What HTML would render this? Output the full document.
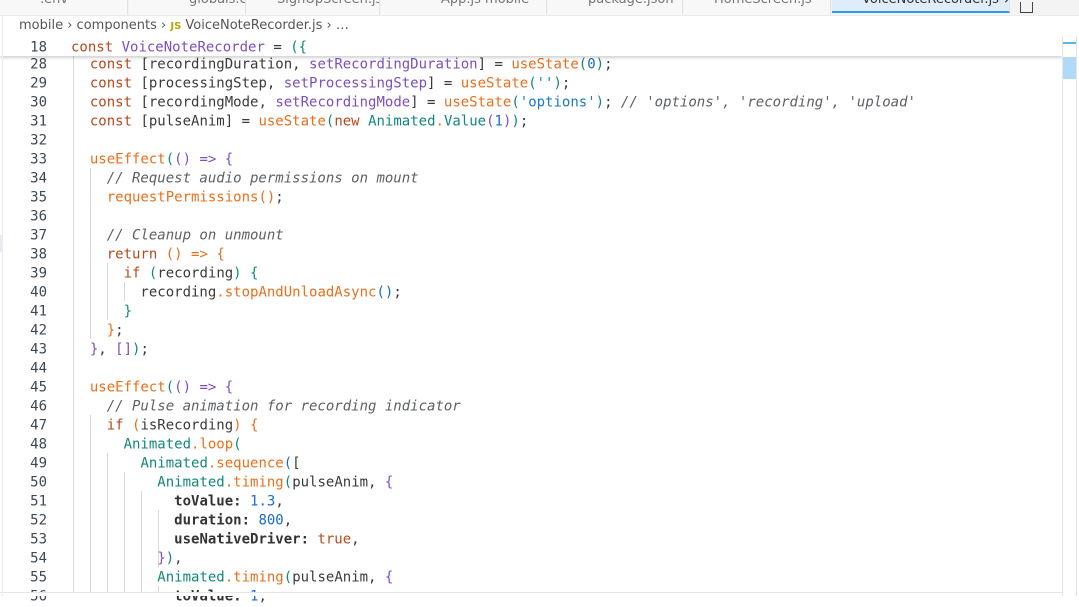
<!DOCTYPE html>
<html><head><meta charset="utf-8"><style>
body{margin:0;width:1079px;height:596px;overflow:hidden;background:#fff;position:relative;font-family:"DejaVu Sans Mono","Liberation Mono",monospace;font-size:14px;color:#3b3b3b}
.tabs{position:absolute;left:0;top:0;width:1079px;height:15px;background:#f3f3f3;overflow:hidden}
.tab{position:absolute;top:0;height:15px;border-right:1px solid #e3e3e3;background:#f8f8f8;font-family:"DejaVu Sans",sans-serif;font-size:13px;color:#777;line-height:0px;white-space:nowrap;overflow:hidden}
.active{background:#dfedfb;border-bottom:2px solid #2f9ae6;height:13px}
.crumb{position:absolute;left:19px;top:16px;font-family:"DejaVu Sans","Liberation Sans",sans-serif;font-size:13px;color:#555;line-height:19px}
.ln{position:absolute;left:0;width:47px;text-align:right;color:#3d4852;line-height:19px;transform:translateY(1.5px)}
.cd{position:absolute;left:73px;white-space:pre;line-height:19px;transform:translateY(1.5px)}
.k{color:#b9471d}.f{color:#e8701e}.p{color:#7d4fc0}.t{color:#13877e}.b{color:#1a6bcc}.c{color:#5c6166;font-style:italic}.s{color:#1a7ac4}.pb{color:#7d4fc0}.w{font-weight:bold;color:#333}.r{color:#b24b1f}
.g{position:absolute;width:1px;background:#d8d8d8}
</style></head><body>
<div class="tabs">
<div class="tab" style="left:0;width:128px;padding-left:40px;box-sizing:border-box">.env</div>
<div class="tab" style="left:129px;width:117px;padding-left:60px;box-sizing:border-box">globals.css</div>
<div class="tab" style="left:247px;width:133px;padding-left:30px;box-sizing:border-box">SignUpScreen.js</div>
<div class="tab" style="left:381px;width:166px;padding-left:60px;box-sizing:border-box">App.js mobile</div>
<div class="tab" style="left:548px;width:135px;padding-left:40px;box-sizing:border-box">package.json</div>
<div class="tab" style="left:684px;width:147px;padding-left:30px;box-sizing:border-box">HomeScreen.js</div>
<div class="tab active" style="left:832px;width:178px;padding-left:30px;box-sizing:border-box;color:#333">VoiceNoteRecorder.js ×</div>
<div style="position:absolute;left:1020px;top:2px;width:11px;height:10px;border:1px solid #444;border-top:none"></div>
</div>
<div style="position:absolute;left:0;top:15px;width:1079px;height:1px;background:#ececec"></div>
<div class="crumb">mobile › components › <span style="color:#b8a50a;font-size:10px;font-weight:bold">JS</span> VoiceNoteRecorder.js › …</div>
<div style="position:absolute;left:0;top:235px;width:3px;height:17px;background:#e4ecf7"></div>

<div class="g" style="left:73px;top:54px;height:542px"></div>
<div class="g" style="left:90px;top:168px;height:171px"></div>
<div class="g" style="left:90px;top:415px;height:181px"></div>
<div class="g" style="left:107px;top:263px;height:57px"></div>
<div class="g" style="left:107px;top:453px;height:143px"></div>
<div class="g" style="left:124px;top:282px;height:19px"></div>
<div class="g" style="left:124px;top:472px;height:124px"></div>
<div class="g" style="left:141px;top:491px;height:105px"></div>
<div class="g" style="left:158px;top:510px;height:57px"></div>
<div class="g" style="left:158px;top:586px;height:10px"></div>

<div class="ln" style="top:54px">28</div><div class="cd" style="top:54px">  <span class="k">const</span> [recordingDuration, <span class="p">setRecordingDuration</span>] = <span class="f">useState</span><span class="t">(</span><span class="b">0</span><span class="t">)</span>;</div>
<div class="ln" style="top:73px">29</div><div class="cd" style="top:73px">  <span class="k">const</span> [processingStep, <span class="p">setProcessingStep</span>] = <span class="f">useState</span><span class="t">(</span><span class="s">''</span><span class="t">)</span>;</div>
<div class="ln" style="top:92px">30</div><div class="cd" style="top:92px">  <span class="k">const</span> [recordingMode, <span class="p">setRecordingMode</span>] = <span class="f">useState</span><span class="t">(</span><span class="s">'options'</span><span class="t">)</span>; <span class="c">// 'options', 'recording', 'upload'</span></div>
<div class="ln" style="top:111px">31</div><div class="cd" style="top:111px">  <span class="k">const</span> [pulseAnim] = <span class="f">useState</span><span class="t">(</span><span class="k">new</span> <span class="t">Animated</span><span class="f">.</span><span class="t">Value</span><span class="pb">(</span><span class="b">1</span><span class="pb">)</span><span class="t">)</span>;</div>
<div class="ln" style="top:130px">32</div>
<div class="ln" style="top:149px">33</div><div class="cd" style="top:149px">  <span class="f">useEffect</span><span class="t">(</span><span class="p">()</span> <span class="p">=&gt;</span> <span class="p">{</span></div>
<div class="ln" style="top:168px">34</div><div class="cd" style="top:168px">    <span class="c">// Request audio permissions on mount</span></div>
<div class="ln" style="top:187px">35</div><div class="cd" style="top:187px">    <span class="f">requestPermissions</span><span class="f">()</span>;</div>
<div class="ln" style="top:206px">36</div>
<div class="ln" style="top:225px">37</div><div class="cd" style="top:225px">    <span class="c">// Cleanup on unmount</span></div>
<div class="ln" style="top:244px">38</div><div class="cd" style="top:244px">    <span class="r">return</span> <span class="f">()</span> <span class="f">=&gt;</span> <span class="f">{</span></div>
<div class="ln" style="top:263px">39</div><div class="cd" style="top:263px">      <span class="r">if</span> <span class="t">(</span>recording<span class="t">)</span> <span class="t">{</span></div>
<div class="ln" style="top:282px">40</div><div class="cd" style="top:282px">        recording<span class="f">.stopAndUnloadAsync</span><span class="b">()</span>;</div>
<div class="ln" style="top:301px">41</div><div class="cd" style="top:301px">      <span class="t">}</span></div>
<div class="ln" style="top:320px">42</div><div class="cd" style="top:320px">    <span class="f">}</span>;</div>
<div class="ln" style="top:339px">43</div><div class="cd" style="top:339px">  <span class="p">}</span>, <span class="p">[]</span><span class="t">)</span>;</div>
<div class="ln" style="top:358px">44</div>
<div class="ln" style="top:377px">45</div><div class="cd" style="top:377px">  <span class="f">useEffect</span><span class="t">(</span><span class="p">()</span> <span class="p">=&gt;</span> <span class="p">{</span></div>
<div class="ln" style="top:396px">46</div><div class="cd" style="top:396px">    <span class="c">// Pulse animation for recording indicator</span></div>
<div class="ln" style="top:415px">47</div><div class="cd" style="top:415px">    <span class="r">if</span> <span class="f">(</span>isRecording<span class="f">)</span> <span class="f">{</span></div>
<div class="ln" style="top:434px">48</div><div class="cd" style="top:434px">      <span class="t">Animated</span><span class="f">.loop</span><span class="t">(</span></div>
<div class="ln" style="top:453px">49</div><div class="cd" style="top:453px">        <span class="t">Animated</span><span class="f">.sequence</span><span class="b">(</span>[</div>
<div class="ln" style="top:472px">50</div><div class="cd" style="top:472px">          <span class="t">Animated</span><span class="f">.timing</span><span class="t">(</span>pulseAnim, <span class="p">{</span></div>
<div class="ln" style="top:491px">51</div><div class="cd" style="top:491px">            <span class="w">toValue:</span> <span class="b">1.3</span>,</div>
<div class="ln" style="top:510px">52</div><div class="cd" style="top:510px">            <span class="w">duration:</span> <span class="b">800</span>,</div>
<div class="ln" style="top:529px">53</div><div class="cd" style="top:529px">            <span class="w">useNativeDriver:</span> <span class="r">true</span>,</div>
<div class="ln" style="top:548px">54</div><div class="cd" style="top:548px">          <span class="p">}</span><span class="t">)</span>,</div>
<div class="ln" style="top:567px">55</div><div class="cd" style="top:567px">          <span class="t">Animated</span><span class="f">.timing</span><span class="t">(</span>pulseAnim, <span class="p">{</span></div>
<div class="ln" style="top:586px">56</div><div class="cd" style="top:586px">            <span class="w">toValue:</span> <span class="b">1</span>,</div>

<div style="position:absolute;left:0;top:593px;width:1079px;height:3px;background:#fff"></div>

<div style="position:absolute;left:0;top:36px;width:1062px;height:20px;background:#fff;box-shadow:0 2px 3px rgba(0,0,0,0.18)"></div>
<div class="ln" style="top:37px">18</div><div class="cd" style="top:37px;left:71px"><span class="k">const</span> <span class="p">VoiceNoteRecorder</span> = <span class="t">(</span><span class="t">{</span></div>

<div style="position:absolute;left:1062px;top:37px;width:1px;height:559px;background:#e6e6e6"></div>
<div style="position:absolute;left:1076px;top:37px;width:1px;height:559px;background:#e6e6e6"></div>
<div style="position:absolute;left:1063px;top:42px;width:13px;height:2px;background:#5cb3ee"></div>
<div style="position:absolute;left:1063px;top:57px;width:13px;height:22px;background:#b0dbf8"></div>
<div style="position:absolute;left:0;top:592px;width:1062px;height:1px;background:#e4e4ea"></div>
<div style="position:absolute;left:2px;top:16px;width:1px;height:580px;background:#ececec"></div>
</body></html>
